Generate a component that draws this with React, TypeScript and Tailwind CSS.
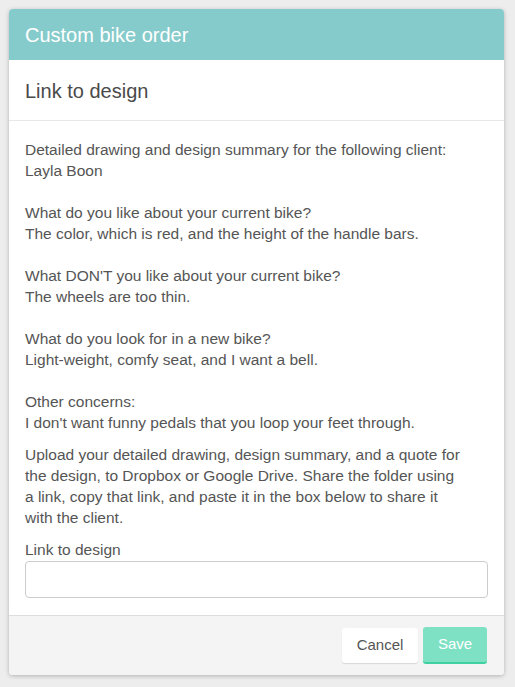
import React from "react";

export default function App() {
  return (
    <div
      className="min-h-[687px] w-full bg-[#ededed] pt-[9px] pl-[9px] pr-[11px] pb-[11px]"
      style={{ fontFamily: '"Liberation Sans", Arial, sans-serif' }}
    >
      <div className="w-[495px] rounded-[4px] bg-white shadow-[0_1px_4px_rgba(0,0,0,0.25)] overflow-hidden">
        <div className="h-[51px] bg-[#86cbcb] px-4 flex items-center">
          <h1 className="text-[20px] leading-none text-white">Custom bike order</h1>
        </div>
        <div className="h-[61px] px-4 flex items-center border-b border-[#e8e8e8]">
          <h2 className="text-[20px] leading-none text-[#4a4a4a] pt-[2px]">Link to design</h2>
        </div>
        <div className="px-4 pt-[18px] pb-[17px] text-[15.5px] leading-[21px] text-[#555555]">
          <p className="whitespace-pre-line">
            {`Detailed drawing and design summary for the following client:
Layla Boon

What do you like about your current bike?
The color, which is red, and the height of the handle bars.

What DON'T you like about your current bike?
The wheels are too thin.

What do you look for in a new bike?
Light-weight, comfy seat, and I want a bell.

Other concerns:
I don't want funny pedals that you loop your feet through.`}
          </p>
          <p className="mt-[11px]">
            Upload your detailed drawing, design summary, and a quote for
            <br />
            the design, to Dropbox or Google Drive. Share the folder using
            <br />
            a link, copy that link, and paste it in the box below to share it
            <br />
            with the client.
          </p>
          <label className="block mt-[11px]">Link to design</label>
          <input
            type="text"
            className="block w-full h-[37px] mt-[1px] rounded-[4px] border border-[#cccccc] bg-white px-2 outline-none"
          />
        </div>
        <div className="h-[60px] bg-[#f4f4f4] border-t border-[#dddddd] flex items-center justify-end gap-[5px] pr-[17px]">
          <button className="w-[76px] h-[35px] rounded-[3px] bg-white text-[15px] text-[#555555] shadow-[0_1px_1px_rgba(0,0,0,0.12)]">
            Cancel
          </button>
          <button className="w-[64px] h-[37px] rounded-[3px] bg-[#7fe1c4] border-b-2 border-[#3fd1a2] text-[15px] text-white">
            Save
          </button>
        </div>
      </div>
    </div>
  );
}
